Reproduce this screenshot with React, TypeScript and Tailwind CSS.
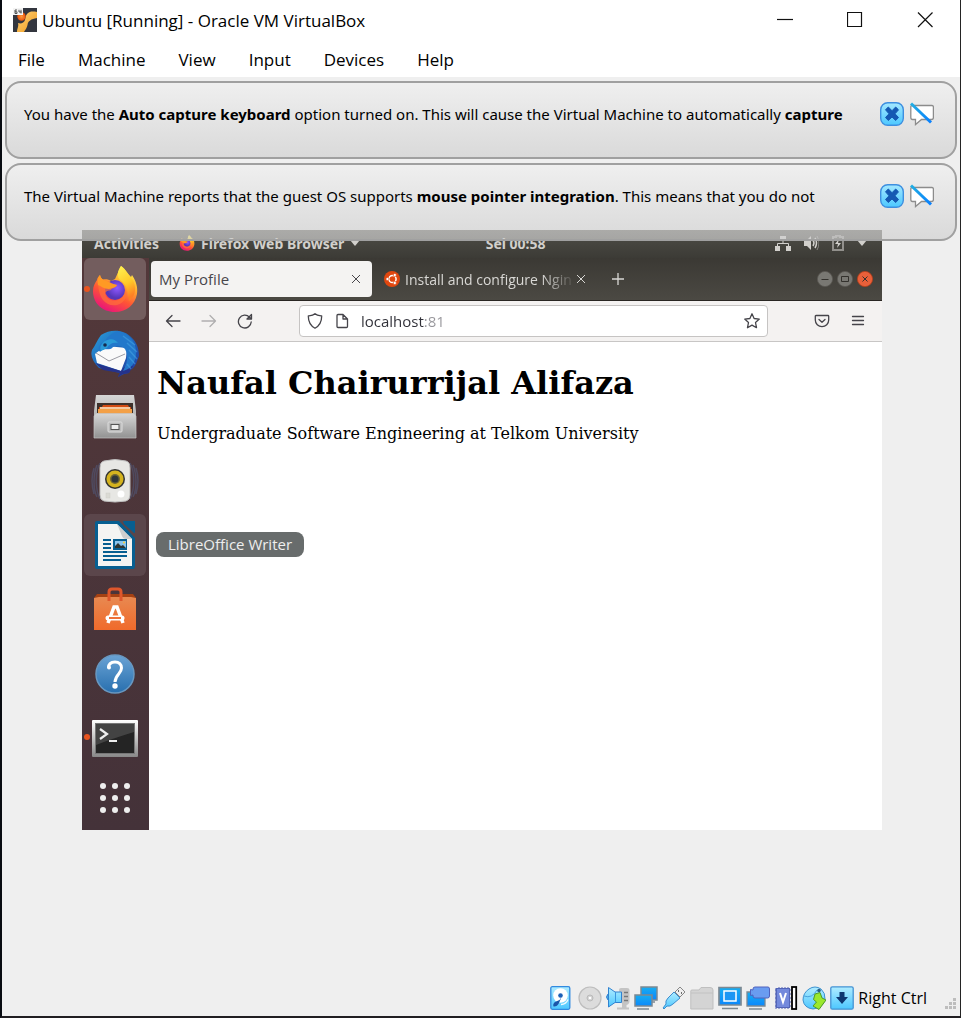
import type { ReactNode } from "react";

const menus = ["File", "Machine", "View", "Input", "Devices", "Help"];

function VmLogo() {
  return (
    <svg viewBox="0 0 24 24" className="size-6 shrink-0" aria-hidden="true">
      <defs>
        <linearGradient id="vmGold" x1="0" y1="0" x2="1" y2="1">
          <stop offset="0" stopColor="#ffd27a" />
          <stop offset="1" stopColor="#f09a1a" />
        </linearGradient>
        <radialGradient id="vmBall">
          <stop offset="0" stopColor="#ff9a3c" />
          <stop offset="1" stopColor="#e8500a" />
        </radialGradient>
      </defs>
      <rect width="24" height="24" fill="#33363f" />
      <path d="M14 6C17 3 20 3.500 24 4V10C18 11 15 13 14.500 17C14 20 12 22 11 24H4C4 20 6 19 5 15C8 16 11 15 12 12C12.500 10 12.500 8 14 6Z" fill="url(#vmGold)" />
      <circle cx="8.500" cy="8.500" r="4.200" fill="url(#vmBall)" />
      <rect width="10" height="7" fill="#f4f4f4" />
      <path d="M4 2H2V5.500H4V3.800H2M6 1.800V4H8.500M8 1.800V5.500" fill="none" stroke="#444" strokeWidth=".9" />
    </svg>
  );
}

function DismissIcon() {
  return (
    <svg viewBox="0 0 24 24" className="size-6" aria-hidden="true">
      <defs>
        <linearGradient id="dismissBlue" x1="0" y1="0" x2="0" y2="1">
          <stop offset="0" stopColor="#a4e8ff" />
          <stop offset="1" stopColor="#4cc8ff" />
        </linearGradient>
      </defs>
      <rect x=".7" y=".7" width="22.600" height="22.600" rx="7" fill="url(#dismissBlue)" stroke="#3d8fe0" strokeWidth="1.400" />
      <path d="M8.300 5L12 8.700L15.700 5L18.500 7.800L15 11.800L18.500 15.500L15.700 18.500L12 15L8.300 18.500L5.500 15.500L9 11.800L5.500 7.800Z" fill="#1459b3" stroke="#1459b3" strokeLinejoin="round" />
    </svg>
  );
}

function MuteIcon() {
  return (
    <svg viewBox="0 0 24 24" className="size-6" aria-hidden="true">
      <path d="M2 3.500H22Q23.400 3.500 23.400 5V15.500Q23.400 17.500 21.500 17.500H11.500L5.500 22.500V17.500H2.500Q.8 17.500 .8 15.500V5Q.8 3.500 2 3.500Z" fill="#fff" stroke="#8c8c8c" strokeWidth="1.300" />
      <path d="M1 1.500L21 20.500" stroke="url(#muteStroke)" strokeWidth="3" />
      <defs>
        <linearGradient id="muteStroke" x1="0" y1="0" x2="1" y2="1">
          <stop offset="0" stopColor="#22aee2" />
          <stop offset="1" stopColor="#0880ff" />
        </linearGradient>
      </defs>
    </svg>
  );
}

function Notice({ children }: { children: ReactNode }) {
  return (
    <section className="flex h-[78px] items-start gap-[6px] rounded-2xl border-2 border-[#a0a0a0] bg-linear-to-b from-[#efefefb0] to-[#d0d0d0b0] pt-[19px] pr-[21px] pl-[17px]">
      <p className="min-w-0 flex-1 whitespace-nowrap text-[15px] leading-6 text-black">{children}</p>
      <button type="button" aria-label="Close"><DismissIcon /></button>
      <button type="button" aria-label="Do not show again"><MuteIcon /></button>
    </section>
  );
}

function FirefoxIcon({ className }: { className: string }) {
  return (
    <svg viewBox="0 0 48 48" className={className} aria-hidden="true">
      <defs>
        <linearGradient id="ffBody" x1=".8" y1="0" x2=".3" y2="1">
          <stop offset="0" stopColor="#fff44f" />
          <stop offset=".35" stopColor="#ffb02e" />
          <stop offset=".65" stopColor="#ff5634" />
          <stop offset="1" stopColor="#e8127c" />
        </linearGradient>
        <radialGradient id="ffGlobe" cx=".6" cy=".4">
          <stop offset="0" stopColor="#9059ff" />
          <stop offset="1" stopColor="#5636b8" />
        </radialGradient>
        <linearGradient id="ffFlame" x1="0" y1="0" x2=".3" y2="1">
          <stop offset="0" stopColor="#fff352" />
          <stop offset=".6" stopColor="#ffc928" />
          <stop offset="1" stopColor="#ff7f24" />
        </linearGradient>
      </defs>
      <path d="M9 10C9.500 12 10.500 13.500 12 14.500C15 14 18 14.500 20 16L24 14L30 1C34 4 37 9 40 12L41 10C45 16 47 22 46 29C44 40 35 47 24 47C11 47 2 38 2 26C2 21 4 18 6 15C6 13 8 11 9 10Z" fill="url(#ffBody)" />
      <path d="M30 1C35 4 37 10 41 14C46 21 45 31 38 36C37 27 37 20 29 15C26 12 26 6 30 1Z" fill="url(#ffFlame)" />
      <circle cx="24" cy="25" r="10" fill="url(#ffGlobe)" />
      <path d="M7 19C11 15 17 15 20 18C22 19 24 20 26 20C25 23 21 23 20 25C18 26 16 25 14 28C15 34 21 37 27 35C33 33 35 28 34 23C38 30 34 38 26 40C15 42 8 34 7 19Z" fill="#ff7139" opacity=".7" />
      <path d="M9 10C10 15 14 15 18 17C21 19 24 19 26 20C25 23 20 23 18 24C13 24 10 21 7 20C6 16 7 12 9 10Z" fill="#ff9a24" />
    </svg>
  );
}

function ThunderbirdIcon() {
  return (
    <svg viewBox="0 0 48 48" className="size-12" aria-hidden="true">
      <defs>
        <linearGradient id="tbBlue" x1="0" y1="0" x2="1" y2="1">
          <stop offset="0" stopColor="#2aa0dc" />
          <stop offset=".45" stopColor="#1f69bd" />
          <stop offset="1" stopColor="#21379c" />
        </linearGradient>
      </defs>
      <g transform="translate(0 1)">
        <path d="M10 5C20-2 34 0 40 7C45 11 48 18 48 26C45 34 44 38 39 40L38 43L33 44L27 47L29 43L8 38C2 32-1 26 1 20C4 16 6 10 10 5Z" fill="url(#tbBlue)" />
        <path d="M4 24C10 18 13 21 15 16L36 18L35 28L30 41L6 33Z" fill="#fafafa" />
        <path d="M5 23L18 31L34 24" fill="none" stroke="#9c9ca4" strokeWidth="1" />
        <path d="M4 33L30 41L33 37L42 36L38 43L32 44L27 47L29 43L12 40Z" fill="#25328b" />
        <path d="M27 1C37 3 45 11 45 22C45 33 40 39 32 41C36 34 38 26 34 19C30 15 24 15 21 18C18 21 13 17 9 22C6 18 9 13 14 11C17 6 21 3 27 1Z" fill="#2278cb" />
        <path d="M14 11C20 8 24 9 27 13C22 12 18 14 16 18L10 21C8 17 11 13 14 11Z" fill="#2a9bd8" />
        <path d="M32 6L44 15M36 13L46 22M38 20L46 29M38 27L44 34M36 34L40 39" stroke="#4aa8e4" strokeWidth="1.500" opacity=".5" />
        <circle cx="14" cy="15" r="1.800" fill="#172b4e" />
      </g>
    </svg>
  );
}

function FilesIcon() {
  return (
    <svg viewBox="0 0 48 48" className="size-12" aria-hidden="true">
      <defs>
        <linearGradient id="cabinet" x1="0" y1="0" x2="0" y2="1">
          <stop offset="0" stopColor="#d6d6d6" />
          <stop offset="1" stopColor="#929292" />
        </linearGradient>
      </defs>
      <path d="M5 2H43L45 18V45H3V18Z" fill="url(#cabinet)" />
      <rect x="6" y="10" width="36" height="10" fill="#3d302b" />
      <path d="M8 20V14H11L12 12H37L38 14H40V20" fill="#d34b13" />
      <path d="M7 16H41V21H7Z" fill="#f3a047" />
      <path d="M9 15H39" stroke="#fff0d2" strokeWidth="1.500" />
      <path d="M5 20.500H43L45 23V45H3V23Z" fill="url(#cabinet)" stroke="#c4c4c4" strokeWidth=".7" />
      <rect x="17" y="29" width="14" height="10" rx="1" fill="#bababa" stroke="#ddd" />
      <rect x="20" y="31.500" width="8" height="5" fill="#eee" stroke="#555" />
    </svg>
  );
}

function MusicIcon() {
  return (
    <svg viewBox="0 0 52 48" className="h-12 w-13" aria-hidden="true">
      <path d="M11 6C6 15 6 32 11 42M8 8C4 18 4 32 8 40M5 11Q1 23 5 37M41 6C46 15 46 32 41 42M44 8C48 18 48 32 44 40M47 11Q51 23 47 37" fill="none" stroke="#53648f" strokeWidth="1.500" opacity=".45" />
      <path d="M15 4Q26 1 37 4Q41 5 41 11V38Q41 43 37 44Q26 46 15 44Q11 43 11 38V11Q11 5 15 4Z" fill="#e7e7e4" stroke="#bdbdbd" />
      <circle cx="26" cy="22" r="10" fill="#333430" />
      <circle cx="26" cy="22" r="8.500" fill="#d4b31f" />
      <circle cx="26" cy="22" r="5" fill="#6f6734" />
      <circle cx="26" cy="22" r="3.500" fill="#2f363b" />
      <circle cx="32" cy="37" r="3.500" fill="#fff" />
      <rect x="17" y="36" width="4" height="5" fill="#dadad4" stroke="#cdcdc8" strokeWidth=".5" />
    </svg>
  );
}

function WriterIcon() {
  return (
    <svg viewBox="0 0 48 48" className="size-12" aria-hidden="true">
      <path d="M6 0H28L44 17V45Q44 48 42 48H6Q4 48 4 46V2Q4 0 6 0ZM32 0H44V12Q42 12 41 10L33 3Z" fill="#075f91" />
      <path d="M7 3H26L41 18V45H7Z" fill="#f4f4f2" />
      <path d="M26 3L41 18H35Q32 18 31 15Z" fill="#cecece" />
      <path d="M12 19H20M12 23H20M12 27H20M12 31H36M12 35H36M12 39H30" stroke="#075f91" strokeWidth="2" />
      <rect x="22" y="18" width="14" height="11" fill="#075f91" />
      <rect x="24" y="20" width="11" height="7" fill="#8bc5ed" />
      <path d="M24 27V25L27 22L30 25L32 24L35 27Z" fill="#2e3530" />
      <circle cx="33" cy="21.500" r="1" fill="#ffd12e" />
    </svg>
  );
}

function SoftwareIcon() {
  return (
    <svg viewBox="0 0 48 48" className="size-12" aria-hidden="true">
      <defs>
        <linearGradient id="bag" x1="0" y1="0" x2="0" y2="1">
          <stop offset="0" stopColor="#e88951" />
          <stop offset="1" stopColor="#f06a2b" />
        </linearGradient>
      </defs>
      <path d="M6 9H42L45 13V18H3V13Z" fill="#a54113" />
      <path d="M3 13L8 12H40L45 13V45H3Z" fill="url(#bag)" />
      <path d="M18 16V7Q18 4 21 4H27Q30 4 30 7V16" fill="none" stroke="#df572c" strokeWidth="3" />
      <path d="M17 38L23 22H26L32 38" fill="none" stroke="#fff" strokeWidth="3.500" />
      <rect x="14.500" y="30.500" width="19" height="5" rx="2.500" fill="#fff" />
      <path d="M18 33H30" stroke="#ee713a" strokeWidth="2" />
    </svg>
  );
}

function HelpIcon() {
  return (
    <svg viewBox="0 0 48 48" className="size-12" aria-hidden="true">
      <defs>
        <linearGradient id="helpBlue" x1="0" y1="0" x2="0" y2="1">
          <stop offset="0" stopColor="#6aa3d5" />
          <stop offset="1" stopColor="#286fae" />
        </linearGradient>
      </defs>
      <circle cx="24" cy="25" r="19" fill="url(#helpBlue)" stroke="#6898c1" strokeWidth="1.500" />
      <path d="M17.500 19C17.500 15 20 13 24 13C28 13 30.500 15.500 30.500 19C30.500 25 24.500 25 24 33" fill="none" stroke="#fff" strokeWidth="3" />
      <circle cx="18" cy="18.500" r="2" fill="#fff" />
      <circle cx="24" cy="37" r="2.700" fill="#fff" />
    </svg>
  );
}

function TerminalIcon() {
  return (
    <svg viewBox="0 0 48 48" className="size-12" aria-hidden="true">
      <defs>
        <linearGradient id="termFrame" x1="0" y1="0" x2="0" y2="1">
          <stop offset="0" stopColor="#fff" />
          <stop offset="1" stopColor="#888" />
        </linearGradient>
      </defs>
      <rect x="1" y="7" width="46" height="37" rx="1" fill="url(#termFrame)" />
      <rect x="4.500" y="10.500" width="39" height="30" fill="#242424" stroke="#777" />
      <path d="M5 11H43V19Q20 26 5 32Z" fill="#555" opacity=".65" />
      <path d="M9 16L16 21L9 26" fill="none" stroke="#eee" strokeWidth="2.200" />
      <path d="M18 28H26" stroke="#eee" strokeWidth="2" />
    </svg>
  );
}

function AppsIcon() {
  return (
    <svg viewBox="0 0 32 32" className="size-8" fill="#eee" aria-hidden="true">
      {[4, 16, 28].map((y) => [4, 16, 28].map((x) => <circle key={`${x}-${y}`} cx={x} cy={y} r="3" />))}
    </svg>
  );
}

const dockApps: { name: string; icon: ReactNode; tile?: string; running?: boolean }[] = [
  { name: "Firefox Web Browser", icon: <FirefoxIcon className="size-12" />, tile: "bg-[#735d5e]", running: true },
  { name: "Thunderbird Mail", icon: <ThunderbirdIcon /> },
  { name: "Files", icon: <FilesIcon /> },
  { name: "Rhythmbox", icon: <MusicIcon /> },
  { name: "LibreOffice Writer", icon: <WriterIcon />, tile: "bg-[#5b464b]" },
  { name: "Ubuntu Software", icon: <SoftwareIcon /> },
  { name: "Help", icon: <HelpIcon /> },
  { name: "Terminal", icon: <TerminalIcon />, running: true },
];

function Dock() {
  return (
    <nav aria-label="Applications" className="flex w-[67px] shrink-0 flex-col gap-[2px] bg-linear-to-b from-[#53383a] to-[#443239] pr-[3px] pb-1 pl-[2px]">
      {dockApps.map((app) => (
        <div key={app.name} className="relative">
          <button type="button" aria-label={app.name} className={`flex h-[62px] w-full items-center justify-center rounded-md ${app.tile ?? ""}`}>
            {app.icon}
          </button>
          {app.running && <span className="absolute top-7 left-0 size-[6px] rounded-full bg-[#e95420]" />}
          {app.name === "LibreOffice Writer" && (
            <span role="tooltip" className="absolute top-[18px] left-[72px] z-10 h-[25px] rounded-lg bg-[#686c6c] px-3 text-[15px] leading-[25px] whitespace-nowrap text-[#eee]">
              LibreOffice Writer
            </span>
          )}
        </div>
      ))}
      <button type="button" aria-label="Show applications" className="flex h-14 items-center justify-center">
        <AppsIcon />
      </button>
    </nav>
  );
}

function GuestTopBar() {
  return (
    <header className="grid h-7 grid-cols-[39fr_auto_32fr] items-center bg-linear-to-b from-[#4f4e47] to-[#3c3b36] pr-[15px] pb-[2px] pl-3 font-['Noto_Sans',sans-serif] text-[14px] font-bold text-[#d2d0cc]">
      <div className="flex items-center gap-5">
        <span>Activities</span>
        <span className="flex items-center gap-[6px]">
          <FirefoxIcon className="size-4" />
          Firefox Web Browser
          <svg viewBox="0 0 10 6" className="h-[6px] w-[10px] fill-current" aria-hidden="true"><path d="M0 0H10L5 6Z" /></svg>
        </span>
      </div>
      <time>Sel 00:58</time>
      <div className="flex items-center justify-end gap-3">
        <svg viewBox="0 0 16 16" className="size-4" aria-hidden="true">
          <path d="M5 1H11V6H5ZM0 11H5V16H0ZM11 11H16V16H11Z" fill="currentColor" />
          <path d="M8 5V8.500M2.500 11V8.500H13.500V11" fill="none" stroke="currentColor" />
        </svg>
        <svg viewBox="0 0 16 16" className="size-4" aria-hidden="true">
          <path d="M1 5H4L8 1V15L4 11H1Z" fill="currentColor" />
          <path d="M10 5Q12 8 10 11M12 3Q15 8 12 13" fill="none" stroke="currentColor" strokeWidth="1.500" />
          <path d="M14 1Q18 8 14 15" fill="none" stroke="#85837f" />
        </svg>
        <svg viewBox="0 0 14 16" className="h-4 w-[14px]" aria-hidden="true">
          <path d="M2 2H5V.8H9V2H12V15H2Z" fill="none" stroke="#92908c" strokeWidth="2" />
          <path d="M8 4L4 9H7L6 13L10 8H7Z" fill="currentColor" />
        </svg>
        <svg viewBox="0 0 10 6" className="h-[6px] w-[10px] fill-current" aria-hidden="true"><path d="M0 0H10L5 6Z" /></svg>
      </div>
    </header>
  );
}

function Cross() {
  return (
    <svg viewBox="0 0 10 10" className="size-[10px]" stroke="currentColor" aria-hidden="true">
      <path d="M1 1L9 9M9 1L1 9" />
    </svg>
  );
}

function TabStrip() {
  return (
    <div className="flex h-[43px] items-center border-b border-[#292622] bg-linear-to-b from-[#3b3934] to-[#4b4943] pr-[9px] pl-[2px] text-[14px]">
      <div className="flex h-9 w-[221px] items-center justify-between rounded bg-[#f4f3f2] px-2 pr-[11px] text-[#48464b]">
        <button type="button" className="text-[15px]">My Profile</button>
        <button type="button" aria-label="Close tab"><Cross /></button>
      </div>
      <div className="flex items-center pl-3 text-[#d9d8d5]">
        <svg viewBox="0 0 16 16" className="mr-[5px] size-4" aria-hidden="true">
          <circle cx="8" cy="8" r="8" fill="#e1470f" />
          <circle cx="8.500" cy="8" r="3.600" fill="none" stroke="#fff" strokeWidth="1.500" />
          <g fill="#fff" stroke="#e1470f" strokeWidth=".6"><circle cx="3.500" cy="8" r="1.600" /><circle cx="10.800" cy="4" r="1.600" /><circle cx="10.800" cy="12" r="1.600" /></g>
        </svg>
        <button type="button" className="w-[171px] mask-r-from-80% text-left whitespace-nowrap">Install and configure Ngin</button>
        <button type="button" aria-label="Close tab"><Cross /></button>
        <button type="button" aria-label="New tab" className="ml-[26px]">
          <svg viewBox="0 0 12 12" className="size-3" stroke="currentColor" strokeWidth="1.300" aria-hidden="true"><path d="M6 0V12M0 6H12" /></svg>
        </button>
      </div>
      <div className="ml-auto flex gap-1">
        {["Minimize", "Maximize", "Close"].map((name) => (
          <button key={name} type="button" aria-label={`${name} browser`}>
            <svg viewBox="0 0 16 16" className="size-4" aria-hidden="true">
              <circle cx="8" cy="8" r="7.600" fill={name === "Close" ? "#e9603a" : "#797873"} stroke={name === "Close" ? "#b8401c" : "#5a5853"} strokeWidth=".8" />
              <path d={name === "Minimize" ? "M4.500 8.500H11.500" : name === "Maximize" ? "M4.500 5.500H11.500V10.500H4.500Z" : "M5.500 5.500L10.500 10.500M10.500 5.500L5.500 10.500"} fill="none" stroke="#33312d" />
            </svg>
          </button>
        ))}
      </div>
    </div>
  );
}

function NavIcon({ label, d, faded }: { label: string; d: string; faded?: boolean }) {
  return (
    <button type="button" aria-label={label} className={faded ? "text-[#b0afb0]" : "text-[#45444a]"}>
      <svg viewBox="0 0 16 16" className="size-4" fill="none" stroke="currentColor" strokeWidth="1.300" strokeLinejoin="round" strokeLinecap="round" aria-hidden="true">
        <path d={d} />
      </svg>
    </button>
  );
}

function NavBar() {
  return (
    <div className="flex h-[41px] items-center border-b border-[#c8c6c5] bg-[#f4f2f1] pr-4 pl-4">
      <div className="mr-[46px] flex gap-5">
        <NavIcon label="Back" d="M15 8H1.500M7 2.500L1.500 8L7 13.500" />
        <NavIcon label="Forward" d="M1 8H14.500M9 2.500L14.500 8L9 13.500" faded />
        <NavIcon label="Reload" d="M14.200 9A6.400 6.400 0 1 1 12.500 4.200L14.500 6V1.500L10 6H14.500" />
      </div>
      <div className="flex h-8 min-w-0 flex-1 items-center gap-[11px] rounded border border-[#c6c4c3] bg-white px-[7px]">
        <NavIcon label="Tracking protection" d="M8 .8C6 2.800 3.500 2.800 1.300 3C1.300 9 3 12.500 8 15.200C13 12.500 14.700 9 14.700 3C12.500 2.800 10 2.800 8 .8Z" />
        <NavIcon label="Site information" d="M3 2.500Q3 1.500 4 1.500H9L13.500 6V13.500Q13.500 14.500 12.500 14.500H4Q3 14.500 3 13.500ZM9 1.500V6H13.500" />
        <input aria-label="Address" defaultValue="localhost:81" className="min-w-0 flex-1 bg-[linear-gradient(to_right,#303038_63px,#96959a_63px)] bg-clip-text text-[15px] text-transparent outline-none" />
        <NavIcon label="Bookmark" d="M8 .8L10.100 5.500L15.300 6.100L11.500 9.500L12.500 14.700L8 12.100L3.500 14.700L4.500 9.500L.7 6.100L5.900 5.500Z" />
      </div>
      <div className="ml-[46px] flex gap-5">
        <NavIcon label="Pocket" d="M2 2.500H14Q14.700 2.500 14.700 3.300V7A6.700 6.700 0 0 1 1.300 7V3.300Q1.300 2.500 2 2.500ZM5 6.500L8 9.300L11 6.500" />
        <NavIcon label="Menu" d="M2.500 3.500H13.500M2.500 7.500H13.500M2.500 11.500H13.500" />
      </div>
    </div>
  );
}

function StatusIcon({ label, children }: { label: string; children: ReactNode }) {
  return (
    <button type="button" aria-label={label}>
      <svg viewBox="0 0 24 24" className="size-6" aria-hidden="true">{children}</svg>
    </button>
  );
}

function StatusBar() {
  return (
    <footer className="flex items-center justify-end gap-1 pt-[3px] pr-[3px] pb-[6px] text-[16px] text-black">
      <svg className="absolute size-0" aria-hidden="true">
        <defs>
          <linearGradient id="stBlue" x1="0" y1="0" x2="0" y2="1">
            <stop offset="0" stopColor="#b0ecff" />
            <stop offset="1" stopColor="#4cc7ff" />
          </linearGradient>
          <linearGradient id="stDeep" x1="0" y1="0" x2="0" y2="1">
            <stop offset="0" stopColor="#18aef0" />
            <stop offset="1" stopColor="#087fff" />
          </linearGradient>
        </defs>
      </svg>
      <StatusIcon label="Hard disks">
        <rect x=".8" y=".7" width="19" height="22.600" rx="1.500" fill="url(#stBlue)" stroke="#318ae0" strokeWidth="1.300" />
        <circle cx="10.500" cy="9.500" r="7.300" fill="#fff" />
        <circle cx="10.500" cy="9.500" r="2.300" fill="#1c60b8" />
        <path d="M11.500 11L9 17Q7 21 3.500 20.500Q2.500 18 5 16L9.500 14Z" fill="#1b55aa" />
        <path d="M11 18.500A8 8 0 0 0 18 13.500" fill="none" stroke="#f2fbff" strokeWidth="1.300" />
      </StatusIcon>
      <StatusIcon label="Optical drives">
        <circle cx="12" cy="12" r="11" fill="#dcdcdc" stroke="#bdbdbd" strokeWidth="1.200" />
        <circle cx="12" cy="12" r="3" fill="#d2d2d2" stroke="#bababa" />
        <circle cx="12" cy="12" r="1.300" fill="#fff" />
      </StatusIcon>
      <StatusIcon label="Audio">
        <path d="M13 4Q13 2 15 2H21Q23.500 2 23.500 4V15Q23.500 18 20.500 19V21.500H23V23.500H11V21.500H16V18Z" fill="#c4c4c4" />
        <path d="M18 6.500H22M18 10.500H22M18 14.500H22" stroke="#777" strokeWidth="1.500" />
        <path d="M2.500 1.500L9 6H15.500V16.500H9L2.500 21Z" fill="url(#stBlue)" stroke="#3182d0" strokeLinejoin="round" />
        <path d="M2 8Q-1 11 2 14" fill="#4caced" stroke="#3182d0" />
        <path d="M9.500 6V16.500" stroke="#3b97de" />
      </StatusIcon>
      <StatusIcon label="Network">
        <path d="M7 1H23V14H7ZM10 16H21" fill="url(#stDeep)" stroke="#7c8993" strokeWidth="1.500" />
        <path d="M1 9H18V20H1ZM3 23H15" fill="url(#stDeep)" stroke="#7c8993" strokeWidth="1.500" />
      </StatusIcon>
      <StatusIcon label="USB">
        <path d="M13 6L18 1L23 6L18 11Z" fill="#eee" stroke="#888" />
        <path d="M16 5H17M19 7H20" stroke="#444" strokeWidth="1.500" />
        <path d="M12 6L18 12L11 18Q8 21 5 20L2 23L1 22L4 18Q3 15 6 12Z" fill="url(#stBlue)" stroke="#3d8dce" />
      </StatusIcon>
      <StatusIcon label="Shared folders">
        <path d="M.8 5Q.8 4 2 4H9L11 1.500H20Q23 1.500 23 4V23H.8Z" fill="#d4d4d4" stroke="#bfbfbf" />
        <path d="M1 7H23" stroke="#c2c2c2" />
      </StatusIcon>
      <StatusIcon label="Display">
        <path d="M1 1.500H23V19H1ZM4 22.500H20" fill="url(#stDeep)" stroke="#7c8993" strokeWidth="1.700" />
        <rect x="6" y="5" width="12" height="10" fill="#1b96f4" stroke="#fff" strokeWidth="1.500" />
      </StatusIcon>
      <StatusIcon label="Recording">
        <path d="M1 6H19V20H1ZM3 23H16" fill="url(#stDeep)" stroke="#7c8993" strokeWidth="1.300" />
        <path d="M7 3Q7 1 9 1H22Q23.500 1 23.500 3V10Q23.500 12 21.500 12H9Q7 12 7 10V9L4.500 9.500V3.500L7 4Z" fill="#6a9cf0" stroke="#5062bd" />
      </StatusIcon>
      <StatusIcon label="Processor">
        <path d="M2 2V23M5 1V23M8 1V23M11 1V23M14 1V23M1 4H17M1 8H17M1 12H17M1 16H17M1 20H17" stroke="#5263b5" />
        <rect x="2.500" y="2.500" width="13" height="19" fill="#7389dc" stroke="#5264b7" />
        <path d="M6 7L9 16L12 7" fill="none" stroke="#fff" strokeWidth="2" />
        <rect x="18" y="1" width="4.200" height="22" fill="#fff" stroke="#000" strokeWidth="1.800" />
      </StatusIcon>
      <StatusIcon label="Mouse integration">
        <path d="M7 3Q13-1 19 3Q23.500 7 23 13Q21 22 11 23Q2 22 1 14Q1 7 7 3Z" fill="url(#stBlue)" stroke="#3c91cf" />
        <path d="M2 10Q10 13 15 4" fill="none" stroke="#4aa3dd" />
        <circle cx="17" cy="4.500" r="1.800" fill="#2c5f86" />
        <path d="M13 8L18 6.500L20 12L24 14L17 23.500L11 20L14.500 16L11.500 13.500Z" fill="#9be82c" stroke="#4f9a25" />
      </StatusIcon>
      <StatusIcon label="Host key">
        <rect x=".8" y=".8" width="22.400" height="22.400" rx="1.500" fill="url(#stBlue)" stroke="#4593d4" strokeWidth="1.300" />
        <path d="M9.500 6H14.500V11H18L12 18L6 11H9.500Z" fill="#0d3770" />
      </StatusIcon>
      <span>Right Ctrl</span>
      <svg viewBox="0 0 12 12" className="ml-[14px] size-3 self-end" fill="#bdbdbd" aria-hidden="true">
        <path d="M8 0H11V3H8ZM4 4H7V7H4ZM8 4H11V7H8ZM0 8H3V11H0ZM4 8H7V11H4ZM8 8H11V11H8Z" />
      </svg>
    </footer>
  );
}

export default function App() {
  return (
    <div className="flex min-h-screen flex-col border-r border-b-2 border-l-2 border-r-[#242424] border-b-[#201e21] border-l-[#080b11] bg-[#efefef] font-['Open_Sans',sans-serif]">
      <header className="bg-white text-black">
        <div className="flex h-10 items-center gap-[5px] pr-[27px] pl-[11px]">
          <VmLogo />
          <h1 className="pt-[2px] text-[17px] leading-6">Ubuntu [Running] - Oracle VM VirtualBox</h1>
          <div className="ml-auto flex gap-[54px]">
            {[
              ["Minimize", "M0 7.500H16"],
              ["Maximize", "M.5 .5H14.500V14.500H.5Z"],
              ["Close", "M1 .5L15.500 15M15.500 .5L1 15"],
            ].map(([name, d]) => (
              <button key={name} type="button" aria-label={name}>
                <svg viewBox="0 0 16 16" className="size-4" fill="none" stroke="#111" strokeWidth="1.200" aria-hidden="true"><path d={d} /></svg>
              </button>
            ))}
          </div>
        </div>
        <nav aria-label="Machine menu" className="flex h-[37px] items-center gap-[33px] pt-[3px] pl-4 text-[17px]">
          {menus.map((menu) => <button key={menu} type="button">{menu}</button>)}
        </nav>
      </header>

      <main className="relative flex flex-1 flex-col justify-center pr-[78px] pl-20">
        <div className="flex flex-col">
          <GuestTopBar />
          <div className="flex">
            <Dock />
            <div className="flex min-w-0 flex-1 flex-col bg-white">
              <TabStrip />
              <NavBar />
              <article className="px-2 pt-[21px] font-['DejaVu_Serif',serif] text-black">
                <h2 className="text-[32px] leading-10 font-bold">Naufal Chairurrijal Alifaza</h2>
                <p className="mt-[21px] text-[16px] leading-5">Undergraduate Software Engineering at Telkom University</p>
              </article>
            </div>
          </div>
        </div>

        <div className="absolute inset-x-[3px] top-1 z-20 flex flex-col gap-1 font-['Noto_Sans',sans-serif]">
          <Notice>
            You have the <b>Auto capture keyboard</b> option turned on. This will cause the Virtual Machine to automatically <b>capture</b>
          </Notice>
          <Notice>
            The Virtual Machine reports that the guest OS supports <b>mouse pointer integration</b>. This means that you do not
          </Notice>
        </div>
      </main>
      <StatusBar />
    </div>
  );
}
